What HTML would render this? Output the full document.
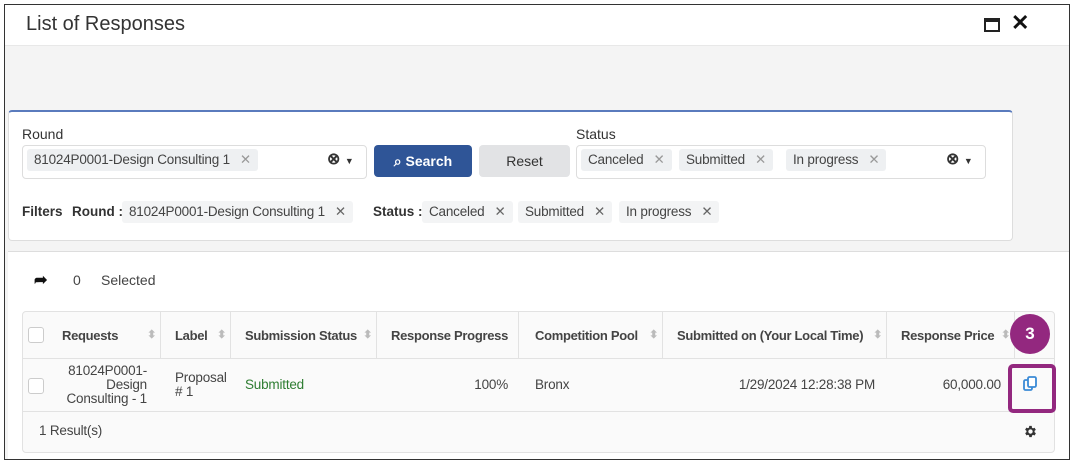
<!DOCTYPE html>
<html><head><style>
*{box-sizing:border-box;margin:0;padding:0}
body{width:1075px;height:467px;background:#fff;font-family:"Liberation Sans",sans-serif;color:#333;position:relative;overflow:hidden;font-size:14px}
.abs{position:absolute}
.tag{position:absolute;background:#eef0f2;border-radius:3px;height:22px;line-height:22px;padding:0 7px;font-size:13.5px;color:#444;white-space:nowrap;letter-spacing:-0.2px}
.tag span{color:#999;margin-left:10px}
.th{position:absolute;top:0;height:47px;line-height:47px;font-weight:bold;color:#444;font-size:13px;letter-spacing:-0.3px;border-right:1px solid #e2e2e2;white-space:nowrap;overflow:hidden}
.sort{position:absolute;right:4px;top:0;color:#bbb;font-size:11px}
.cb{position:absolute;width:16px;height:16px;border:1px solid #ccc;border-radius:3px;background:#fff}
.td{position:absolute;color:#444;font-size:13.5px;letter-spacing:-0.2px}
</style></head><body>
<div class="abs" style="left:4px;top:4px;width:1066px;height:456px;border:1px solid #333;background:#f4f4f4"></div>
<div class="abs" style="left:5px;top:5px;width:1064px;height:41px;background:#fff;border-bottom:1px solid #e8e8e8"></div>
<div class="abs" style="left:26px;top:13px;font-size:20px;color:#333">List of Responses</div>
<div class="abs" style="left:984px;top:18px;width:16px;height:14px;border:2px solid #222;border-top-width:4px"></div>
<div class="abs" style="left:1011px;top:10px;font-size:22px;font-weight:bold;color:#111">✕</div>

<div class="abs" style="left:8px;top:110px;width:1005px;height:131px;background:#fff;border:1px solid #ddd;border-top:2px solid #5a7bbd;border-radius:4px"></div>
<div class="abs" style="left:22px;top:126px;font-size:14px;color:#333">Round</div>
<div class="abs" style="left:22px;top:145px;width:345px;height:34px;border:1px solid #ddd;border-radius:4px;background:#fff"></div>
<div class="tag" style="left:27px;top:149px">81024P0001-Design Consulting 1<span>✕</span></div>
<div class="abs" style="left:327px;top:149px;font-size:16px;font-weight:bold;color:#333">⊗ <span style="font-size:9px">▼</span></div>
<div class="abs" style="left:374px;top:145px;width:98px;height:32px;background:#2f5597;border-radius:4px;color:#fff;font-weight:bold;text-align:center;line-height:32px">⌕ Search</div>
<div class="abs" style="left:479px;top:145px;width:91px;height:32px;background:#e2e3e5;border-radius:4px;color:#333;text-align:center;line-height:32px">Reset</div>
<div class="abs" style="left:576px;top:126px;font-size:14px;color:#333">Status</div>
<div class="abs" style="left:576px;top:145px;width:410px;height:34px;border:1px solid #ddd;border-radius:4px;background:#fff"></div>
<div class="tag" style="left:581px;top:149px">Canceled<span>✕</span></div>
<div class="tag" style="left:679px;top:149px">Submitted<span>✕</span></div>
<div class="tag" style="left:786px;top:149px">In progress<span>✕</span></div>
<div class="abs" style="left:946px;top:149px;font-size:16px;font-weight:bold;color:#333">⊗ <span style="font-size:9px">▼</span></div>
<div class="abs" style="left:22px;top:204px;font-weight:bold;font-size:13.5px;color:#333">Filters</div>
<div class="abs" style="left:72px;top:204px;font-weight:bold;font-size:13.5px;color:#333">Round :</div>
<div class="tag" style="left:122px;top:201px;background:#f3f4f5">81024P0001-Design Consulting 1<span style="color:#666">✕</span></div>
<div class="abs" style="left:373px;top:204px;font-weight:bold;font-size:13.5px;color:#333">Status :</div>
<div class="tag" style="left:422px;top:201px;background:#f3f4f5">Canceled<span style="color:#666">✕</span></div>
<div class="tag" style="left:518px;top:201px;background:#f3f4f5">Submitted<span style="color:#666">✕</span></div>
<div class="tag" style="left:619px;top:201px;background:#f3f4f5">In progress<span style="color:#666">✕</span></div>

<div class="abs" style="left:8px;top:251px;width:1061px;height:208px;background:#fff;border-top:1px solid #ddd"></div>
<div class="abs" style="left:34px;top:270px;font-size:16px;font-weight:bold;color:#111">➦</div>
<div class="abs" style="left:73px;top:272px;color:#444">0</div>
<div class="abs" style="left:101px;top:272px;color:#444">Selected</div>

<div class="abs" style="left:22px;top:311px;width:1033px;height:142px;border:1px solid #e2e2e2;border-radius:4px;background:#fafafa;overflow:hidden">
 <div class="abs" style="left:0;top:0;width:1033px;height:47px;border-bottom:1px solid #e2e2e2"></div>
 <div class="cb" style="left:5px;top:15px"></div>
 <div class="th" style="left:28px;width:110px;padding-left:11px">Requests<span class="sort">⬍</span></div>
 <div class="th" style="left:138px;width:70px;padding-left:14px">Label<span class="sort">⬍</span></div>
 <div class="th" style="left:208px;width:146px;padding-left:14px">Submission Status<span class="sort">⬍</span></div>
 <div class="th" style="left:354px;width:142px;padding-left:14px">Response Progress</div>
 <div class="th" style="left:496px;width:144px;padding-left:16px">Competition Pool<span class="sort">⬍</span></div>
 <div class="th" style="left:640px;width:224px;padding-left:14px">Submitted on (Your Local Time)<span class="sort">⬍</span></div>
 <div class="th" style="left:864px;width:128px;padding-left:14px">Response Price<span class="sort">⬍</span></div>
 <div class="abs" style="left:0;top:47px;width:1033px;height:53px;background:#fafafa;border-bottom:1px solid #e2e2e2"></div>
 <div class="cb" style="left:5px;top:66px"></div>
 <div class="td" style="left:34px;top:52px;width:90px;text-align:right;line-height:14px">81024P0001-<br>Design<br>Consulting - 1</div>
 <div class="td" style="left:152px;top:59px;line-height:14px">Proposal<br># 1</div>
 <div class="td" style="left:222px;top:65px;color:#2e7d32">Submitted</div>
 <div class="td" style="left:354px;top:65px;width:131px;text-align:right">100%</div>
 <div class="td" style="left:512px;top:65px">Bronx</div>
 <div class="td" style="left:640px;top:65px;width:212px;text-align:right">1/29/2024 12:28:38 PM</div>
 <div class="td" style="left:864px;top:65px;width:114px;text-align:right">60,000.00</div>
 <div class="td" style="left:16px;top:111px">1 Result(s)</div>
</div>
<svg class="abs" style="left:1022px;top:376px" width="16" height="16" viewBox="0 0 16 16"><rect x="2" y="4" width="8" height="10" rx="1.5" fill="none" stroke="#3a8ad6" stroke-width="1.8"/><rect x="6" y="1" width="8" height="10" rx="1.5" fill="#fff" stroke="#3a8ad6" stroke-width="1.8"/></svg>
<svg class="abs" style="left:1023px;top:424px" width="15" height="15" viewBox="0 0 24 24"><path fill="#333" d="M19.4 13a7.5 7.5 0 0 0 0-2l2.1-1.6-2-3.5-2.5 1a7 7 0 0 0-1.7-1L15 3h-4l-.4 2.7a7 7 0 0 0-1.7 1l-2.5-1-2 3.5L6.6 11a7.5 7.5 0 0 0 0 2l-2.1 1.6 2 3.5 2.5-1a7 7 0 0 0 1.7 1L11 21h4l.4-2.7a7 7 0 0 0 1.7-1l2.5 1 2-3.5zM13 15.5a3.5 3.5 0 1 1 0-7 3.5 3.5 0 0 1 0 7z" transform="translate(-1 0)"/></svg>
<div class="abs" style="left:1008px;top:364px;width:48px;height:49px;border:4px solid #93287f;border-radius:5px"></div>
<div class="abs" style="left:1010px;top:314px;width:40px;height:40px;border-radius:50%;background:#93287f;color:#fff;font-weight:bold;font-size:17px;text-align:center;line-height:40px">3</div>
</body></html>
